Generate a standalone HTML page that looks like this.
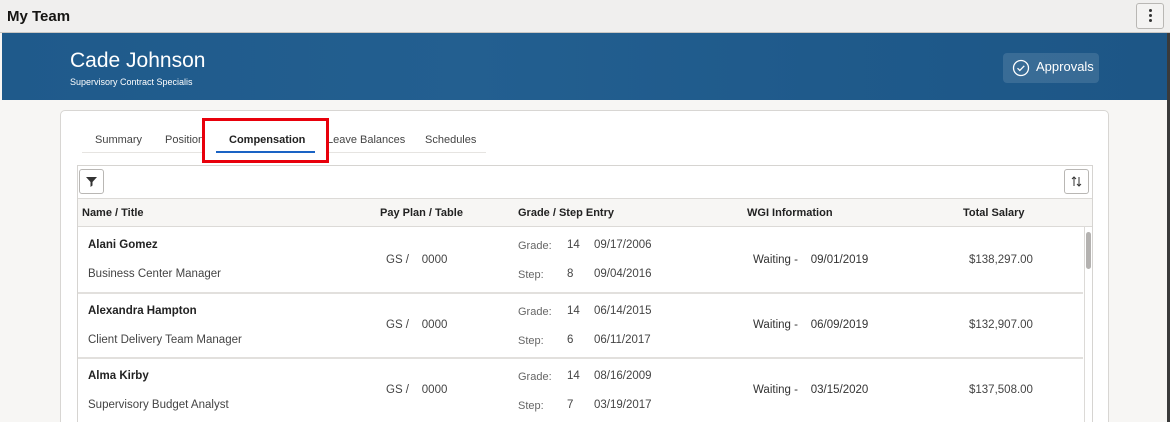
<!DOCTYPE html>
<html><head><meta charset="utf-8"><style>
*{margin:0;padding:0;box-sizing:border-box}
html,body{width:1170px;height:422px;overflow:hidden}
body{background:#f7f6f4;font-family:"Liberation Sans",sans-serif;position:relative;color:#333}
.a{position:absolute;white-space:nowrap}
.top{left:0;top:0;width:1170px;height:33px;background:#f0efee;border-bottom:1px solid #c9c7c4}
.ban{left:2px;top:33px;width:1166px;height:67px;background:linear-gradient(90deg,#1f5a8b,#235f90 40%,#1f5a8b 70%,#1d5686)}
.card{left:60px;top:110px;width:1049px;height:330px;background:#fff;border:1px solid #d8d6d3;border-radius:5px}
.tbl{left:77px;top:165px;width:1016px;height:270px;border:1px solid #d6d4d1;background:#fff}
.hd{left:78px;top:198px;width:1014px;height:29px;background:#f7f6f4;border-top:1px solid #dcdad7;border-bottom:1px solid #dcdad7}
.h{font-weight:bold;font-size:11px;color:#222;top:207px}
.sep{left:78px;width:1005px;height:2px;background:#e2e0dd}
.nm{font-weight:bold;font-size:11.5px;color:#222}
.t{font-size:11.5px;color:#444}
.l{font-size:11px;color:#666}
.tab{font-size:11px;color:#444;top:134px}
.btn{background:#fff;border:1px solid #b9b7b4;border-radius:3px}
</style></head><body>
<div class="a top"></div>
<div class="a" style="left:7px;top:8px;font-size:15px;font-weight:bold;color:#161513">My Team</div>
<div class="a btn" style="left:1136px;top:3px;width:28px;height:26px;background:#f4f3f2"></div>
<div class="a" style="left:1149px;top:9px;width:3px;height:3px;background:#333;border-radius:2px;box-shadow:0 5px 0 #333,0 10px 0 #333"></div>
<div class="a ban"></div>
<div class="a" style="left:70px;top:49px;font-size:21px;color:#fff">Cade Johnson</div>
<div class="a" style="left:70px;top:77px;font-size:9px;color:#fff">Supervisory Contract Specialis</div>
<div class="a" style="left:1003px;top:53px;width:96px;height:30px;background:rgba(255,255,255,.12);border-radius:4px"></div>
<svg class="a" style="left:1012px;top:59px" width="18" height="18" viewBox="0 0 18 18"><circle cx="9" cy="9" r="7.5" fill="none" stroke="#fff" stroke-width="1.3"/><path d="M5.5 9.2l2.3 2.3 4.5-4.7" fill="none" stroke="#fff" stroke-width="1.3"/></svg>
<div class="a" style="left:1036px;top:59px;font-size:13px;color:#fff">Approvals</div>
<div class="a card"></div>
<div class="a" style="left:82px;top:152px;width:404px;height:1px;background:#e6e4e1"></div>
<div class="a tab" style="left:95px">Summary</div>
<div class="a tab" style="left:165px">Position</div>
<div class="a tab" style="left:327px">Leave Balances</div>
<div class="a tab" style="left:425px">Schedules</div>
<div class="a" style="left:202px;top:118px;width:127px;height:45px;border:3px solid #e8000b;background:#fff"></div>
<div class="a" style="left:229px;top:134px;font-size:11px;font-weight:bold;color:#222">Compensation</div>
<div class="a" style="left:216px;top:151px;width:99px;height:2px;background:#1a63c4"></div>
<div class="a tbl"></div>
<div class="a btn" style="left:79px;top:169px;width:25px;height:25px"></div>
<svg class="a" style="left:85px;top:175px" width="13" height="13" viewBox="0 0 13 13"><path d="M1 2h11L7.5 7v3.5L5.5 12V7z" fill="#333"/></svg>
<div class="a btn" style="left:1064px;top:169px;width:25px;height:25px"></div>
<svg class="a" style="left:1070px;top:175px" width="13" height="13" viewBox="0 0 13 13"><path d="M4 11V2M2 4l2-2 2 2M9 2v9M7 9l2 2 2-2" fill="none" stroke="#333" stroke-width="1"/></svg>
<div class="a hd"></div>
<div class="a h" style="left:82px">Name / Title</div>
<div class="a h" style="left:380px">Pay Plan / Table</div>
<div class="a h" style="left:518px">Grade / Step Entry</div>
<div class="a h" style="left:747px">WGI Information</div>
<div class="a h" style="left:963px">Total Salary</div>
<div class="a" style="left:1084px;top:227px;width:1px;height:195px;background:#dcdad7"></div>
<div class="a" style="left:1086px;top:232px;width:5px;height:37px;background:#b4b2b0;border-radius:3px"></div>
<div class="a sep" style="top:292px"></div>
<div class="a sep" style="top:357px"></div>

<div class="a nm" style="left:88px;top:239px">Alani Gomez</div>
<div class="a t" style="left:88px;top:268px">Business Center Manager</div>
<div class="a t" style="left:386px;top:254px">GS /&nbsp;&nbsp;&nbsp; 0000</div>
<div class="a l" style="left:518px;top:240px">Grade:</div><div class="a t" style="left:567px;top:239px">14</div><div class="a t" style="left:594px;top:239px">09/17/2006</div>
<div class="a l" style="left:518px;top:269px">Step:</div><div class="a t" style="left:567px;top:268px">8</div><div class="a t" style="left:594px;top:268px">09/04/2016</div>
<div class="a t" style="left:753px;top:254px;color:#333">Waiting -&nbsp;&nbsp;&nbsp; 09/01/2019</div>
<div class="a t" style="left:969px;top:254px">$138,297.00</div>

<div class="a nm" style="left:88px;top:305px">Alexandra Hampton</div>
<div class="a t" style="left:88px;top:334px">Client Delivery Team Manager</div>
<div class="a t" style="left:386px;top:319px">GS /&nbsp;&nbsp;&nbsp; 0000</div>
<div class="a l" style="left:518px;top:306px">Grade:</div><div class="a t" style="left:567px;top:305px">14</div><div class="a t" style="left:594px;top:305px">06/14/2015</div>
<div class="a l" style="left:518px;top:335px">Step:</div><div class="a t" style="left:567px;top:334px">6</div><div class="a t" style="left:594px;top:334px">06/11/2017</div>
<div class="a t" style="left:753px;top:319px;color:#333">Waiting -&nbsp;&nbsp;&nbsp; 06/09/2019</div>
<div class="a t" style="left:969px;top:319px">$132,907.00</div>

<div class="a nm" style="left:88px;top:370px">Alma Kirby</div>
<div class="a t" style="left:88px;top:399px">Supervisory Budget Analyst</div>
<div class="a t" style="left:386px;top:384px">GS /&nbsp;&nbsp;&nbsp; 0000</div>
<div class="a l" style="left:518px;top:371px">Grade:</div><div class="a t" style="left:567px;top:370px">14</div><div class="a t" style="left:594px;top:370px">08/16/2009</div>
<div class="a l" style="left:518px;top:400px">Step:</div><div class="a t" style="left:567px;top:399px">7</div><div class="a t" style="left:594px;top:399px">03/19/2017</div>
<div class="a t" style="left:753px;top:384px;color:#333">Waiting -&nbsp;&nbsp;&nbsp; 03/15/2020</div>
<div class="a t" style="left:969px;top:384px">$137,508.00</div>
<div class="a" style="left:1167px;top:33px;width:3px;height:389px;background:#3a3a3a"></div>
</body></html>
